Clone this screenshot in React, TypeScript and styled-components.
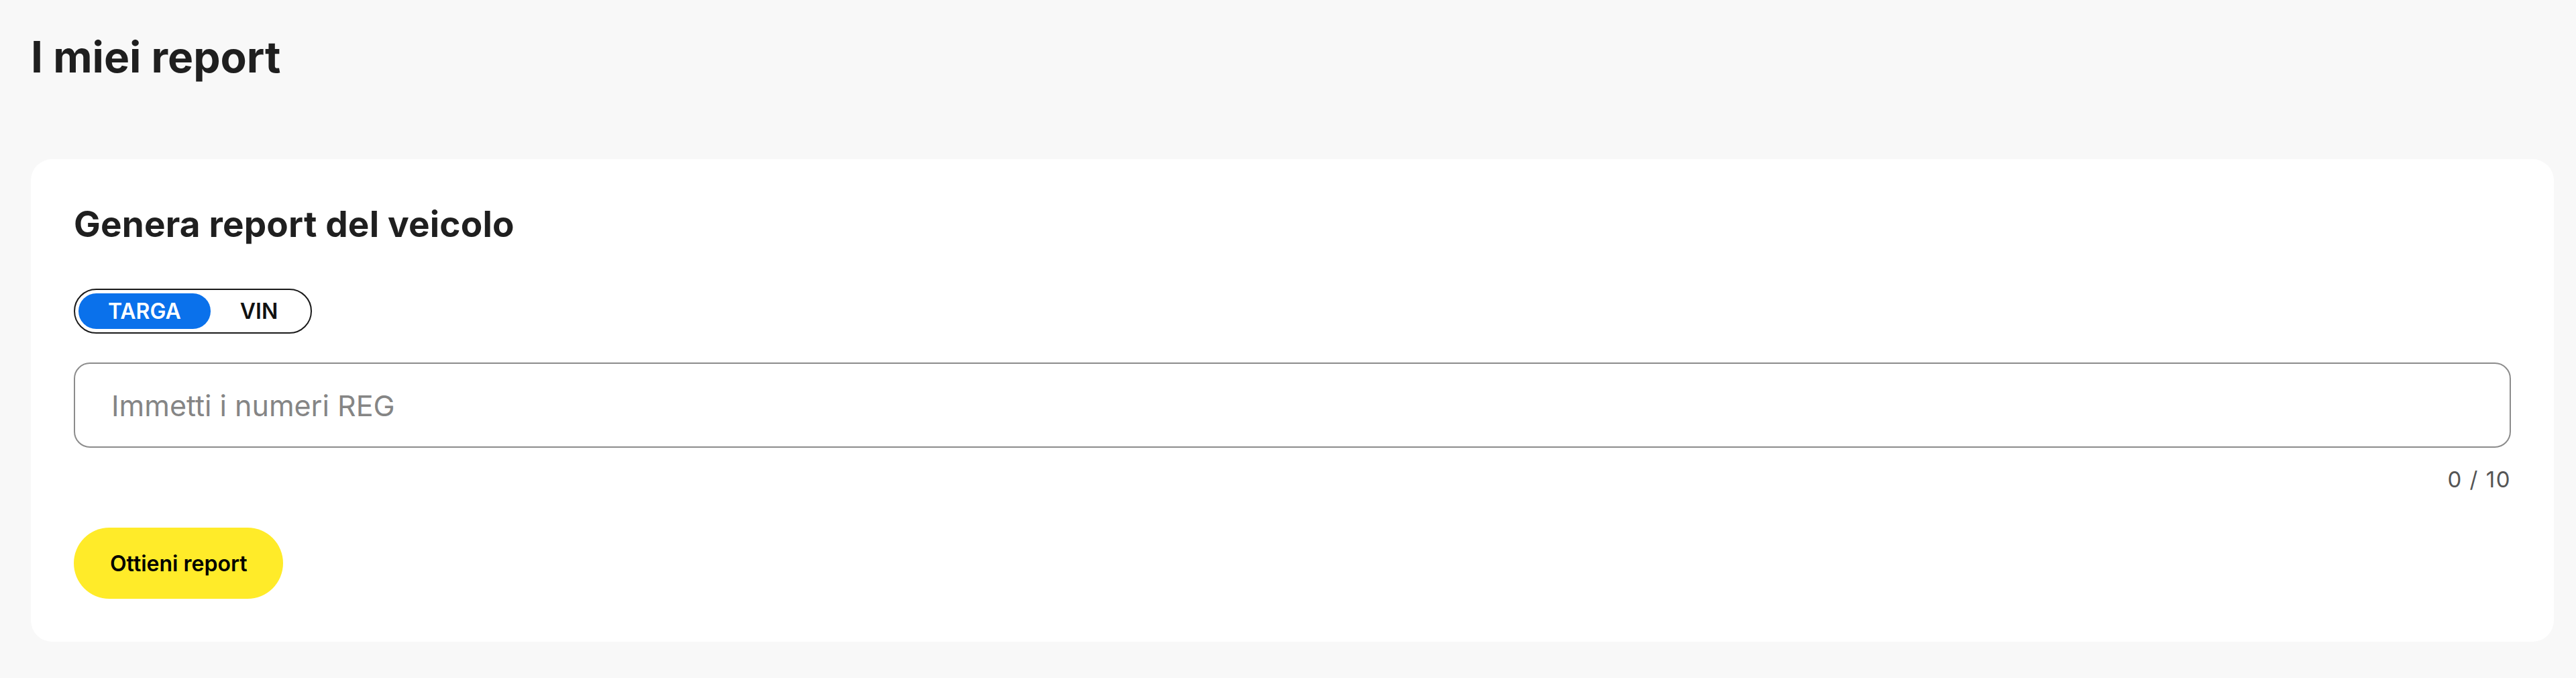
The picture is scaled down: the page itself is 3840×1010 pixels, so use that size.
import { useState } from 'react';
import styled, { createGlobalStyle } from 'styled-components';

const GlobalStyle = createGlobalStyle`
  html, body {
    margin: 0;
    padding: 0;
    background: #f8f8f8;
  }
  body {
    font-family: Inter, "Noto Sans", "Liberation Sans", sans-serif;
    color: #1f1f1f;
  }
  * {
    box-sizing: border-box;
  }
`;

// 페이지 전체
const Page = styled.main`
  min-height: 1010px;
  padding: 47px 33px 54px 46px;
`;

const PageTitle = styled.h1`
  margin: 0 0 114px;
  font-size: 64px;
  line-height: 76px;
  font-weight: 700;
  color: #1f1f1f;
`;

// 카드
const Card = styled.section`
  background: #ffffff;
  border-radius: 32px;
  padding: 66px 64px 64px;
  display: flex;
  flex-direction: column;
  align-items: flex-start;
`;

const CardTitle = styled.h2`
  margin: 0 0 65px;
  font-size: 53px;
  line-height: 62px;
  font-weight: 700;
  letter-spacing: 0.2px;
  color: #1f1f1f;
`;

// 타입 토글
const Toggle = styled.div`
  display: flex;
  padding: 5px;
  border: 2px solid #1a1a1a;
  border-radius: 999px;
  margin-bottom: 43px;
`;

const ToggleOption = styled.button<{ $active: boolean }>`
  height: 53px;
  padding: 0 44px;
  border: none;
  border-radius: 999px;
  font-family: inherit;
  font-size: 32px;
  font-weight: 600;
  cursor: pointer;
  background: ${p => (p.$active ? '#0a71eb' : 'transparent')};
  color: ${p => (p.$active ? '#ffffff' : '#111111')};
`;

const Field = styled.div`
  width: 100%;
  display: flex;
  flex-direction: column;
  align-items: flex-end;
`;

const Input = styled.input`
  width: 100%;
  height: 127px;
  padding: 0 54px;
  border: 2px solid #8c8c8c;
  border-radius: 24px;
  font-family: inherit;
  font-size: 43px;
  color: #1f1f1f;
  outline: none;

  &::placeholder {
    color: #858585;
  }
`;

const Counter = styled.div`
  margin-top: 28px;
  font-size: 33px;
  line-height: 38px;
  letter-spacing: 1.5px;
  color: #555555;
`;

const SubmitButton = styled.button`
  margin-top: 53px;
  height: 106px;
  padding: 0 54px;
  border: none;
  border-radius: 999px;
  background: #ffeb29;
  color: #000000;
  font-family: inherit;
  font-size: 32px;
  font-weight: 600;
  cursor: pointer;
`;

const App = () => {
  const [mode, setMode] = useState<'targa' | 'vin'>('targa');
  const [value, setValue] = useState('');

  return (
    <>
      <GlobalStyle />
      <Page>
        <PageTitle>I miei report</PageTitle>
        <Card>
          <CardTitle>Genera report del veicolo</CardTitle>
          <Toggle>
            <ToggleOption $active={mode === 'targa'} onClick={() => setMode('targa')}>
              TARGA
            </ToggleOption>
            <ToggleOption $active={mode === 'vin'} onClick={() => setMode('vin')}>
              VIN
            </ToggleOption>
          </Toggle>
          <Field>
            <Input
              placeholder="Immetti i numeri REG"
              maxLength={10}
              value={value}
              onChange={e => setValue(e.target.value)}
            />
            <Counter>{value.length} / 10</Counter>
          </Field>
          <SubmitButton>Ottieni report</SubmitButton>
        </Card>
      </Page>
    </>
  );
};

export default App;
